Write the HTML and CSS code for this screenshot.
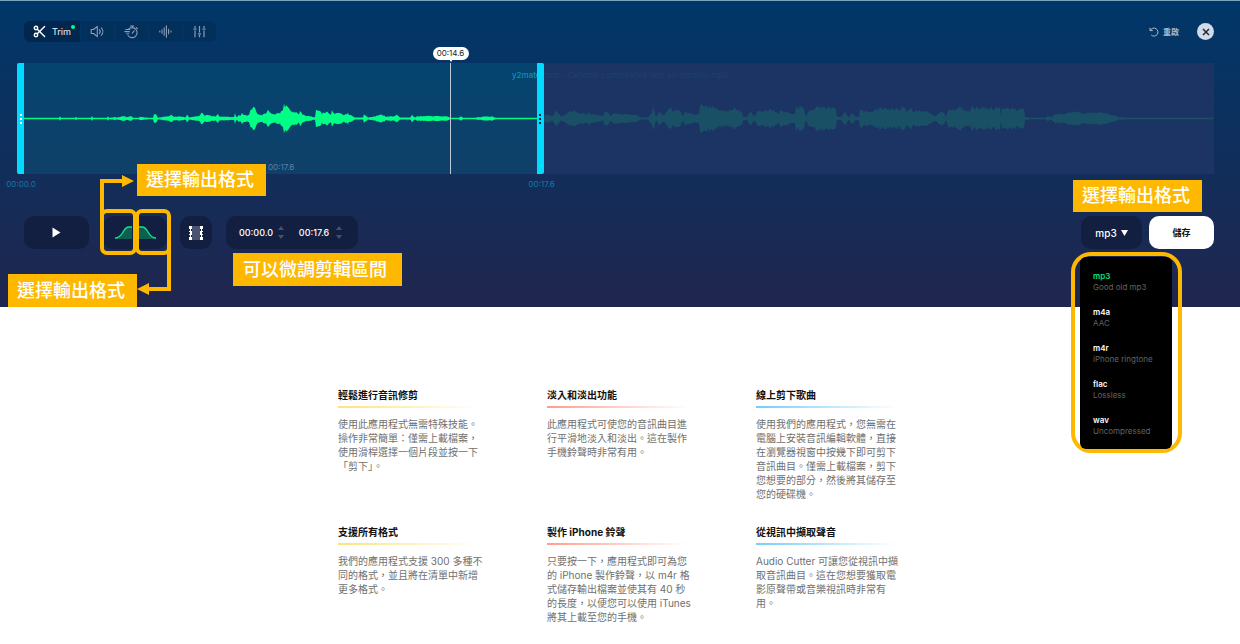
FILE: index.html
```html
<!DOCTYPE html>
<html lang="zh-Hant">
<head>
<meta charset="utf-8">
<meta name="viewport" content="width=device-width, initial-scale=1">
<title>Audio Cutter</title>
<link rel="stylesheet" href="styles.css">
</head>
<body>
<main>
<section class="editor" aria-label="Audio editor">
  <div class="topbar">
    <div class="tabs">
      <button class="tab tab-active" type="button">
        <svg width="13" height="13" viewBox="0 0 13 13" fill="none" stroke="currentColor" stroke-width="1.4" stroke-linecap="round"><circle cx="3" cy="3" r="1.7"/><circle cx="3" cy="10" r="1.7"/><path d="M4.3 4.2 11.6 11.6M4.3 8.8 11.6 1.4"/></svg>
        <span>Trim</span><i class="dot"></i>
      </button>
      <button class="tab" type="button" aria-label="Volume">
        <svg width="15" height="13" viewBox="0 0 15 13" fill="none" stroke="currentColor" stroke-width="1.1" stroke-linejoin="round" stroke-linecap="round"><path d="M1.2 4.5h2.3L7.3 1.3v10.4L3.5 8.5H1.2zM9.4 4.6c1 1.1 1 2.7 0 3.8M11.3 2.8c2.1 2.1 2.1 5.3 0 7.4"/></svg>
      </button>
      <button class="tab" type="button" aria-label="Speed">
        <svg width="15" height="14" viewBox="0 0 15 14" fill="none" stroke="currentColor" stroke-width="1.1" stroke-linecap="round"><path d="M4.6 4.1a5 5 0 1 1-.6 6.4M6.6 1h3.2M8.2 1v1.7M12.4 2.6l1 1M8.2 8.2l2-2.3M1.8 4.5h4M.8 6.6h4.6M2.8 8.7h2"/></svg>
      </button>
      <button class="tab" type="button" aria-label="Pitch">
        <svg width="13" height="13" viewBox="0 0 13 13" fill="none" stroke="currentColor" stroke-width="1.1" stroke-linecap="round"><path d="M.8 6v1M3 4.7v3.6M5.2 2.8v7.4M7.4.8v11.4M9.6 4.2v4.6M12 6v1"/></svg>
      </button>
      <button class="tab" type="button" aria-label="Equalizer">
        <svg width="13" height="13" viewBox="0 0 13 13" fill="none" stroke="currentColor" stroke-width="1.2"><path d="M2 1v2M2 5.5v6.8M.5 4.2h3M6.5 1v6.5M6.5 10v2.3M5 8.8h3M11 1v2M11 5.5v6.8M9.5 4.2h3"/></svg>
      </button>
    </div>
    <div class="actions">
      <button class="restart" type="button">
        <svg width="10" height="10" viewBox="0 0 10 10" fill="none" stroke="currentColor" stroke-width="1"><path d="M1 .8v2.8h2.8M1.3 3.5A4 4 0 1 1 2.2 8"/></svg>
        <span>重啟</span>
      </button>
      <button class="close" type="button" aria-label="Close">
        <svg width="8" height="8" viewBox="0 0 8 8" stroke="currentColor" stroke-width="1.5"><path d="M1 1l6 6M7 1 1 7"/></svg>
      </button>
    </div>
  </div>

  <div class="wave">
    <div class="selection"></div>
    <svg class="wave-svg" viewBox="17 0 1197 111" preserveAspectRatio="none" aria-hidden="true">
      <path id="wave-in" class="wave-in"/><path id="wave-out" class="wave-out"/>
    </svg>
    <div class="filename"><span>y2mate</span>.com – Canción cumpleaños feliz en español.mp3</div>
    <div class="duration">00:17.6</div>
    <div class="handle handle-start"><i></i><i></i><i></i></div>
    <div class="handle handle-end"><i></i><i></i><i></i></div>
    <div class="playhead"><span>00:14.6</span></div>
    <div class="mark mark-start">00:00.0</div>
    <div class="mark mark-end">00:17.6</div>
  </div>

  <div class="controls">
    <button class="pill play" type="button" aria-label="Play"><svg width="9" height="11" viewBox="0 0 9 11" fill="#fff"><path d="M.5.5v10l8-5z"/></svg></button>
    <div class="pill fades">
      <button type="button" aria-label="Fade in"><svg width="17" height="14" viewBox="0 0 17 14"><path d="M0 12C9 12 7 1 14 1h3v12H0z" fill="#0d5e53"/><path d="M0 12C9 12 7 1 14 1h3" fill="none" stroke="#0be881" stroke-width="1.4"/></svg></button>
      <button type="button" aria-label="Fade out"><svg width="17" height="14" viewBox="0 0 17 14"><path d="M17 12C8 12 10 1 3 1H0v12h17z" fill="#0d5e53"/><path d="M17 12C8 12 10 1 3 1H0" fill="none" stroke="#0be881" stroke-width="1.4"/></svg></button>
      <svg class="callouts" width="72" height="128" viewBox="0 0 72 128" fill="none" stroke="#ffb800" stroke-width="4" aria-hidden="true">
        <rect x="2" y="47" width="33" height="42" rx="5"/><rect x="37" y="47" width="32" height="42" rx="5"/>
        <path d="M2 52V17h22M69 84v41H48"/>
        <path d="M22 11l12 6-12 6zM49 119l-12 6 12 6z" fill="#ffb800" stroke="none"/>
      </svg>
      <div class="note note-in">選擇輸出格式</div>
      <div class="note note-out">選擇輸出格式</div>
    </div>
    <button class="pill film" type="button" aria-label="Video"><svg width="14" height="14" viewBox="0 0 14 14"><path d="M3 0h8v14H3z" fill="#4b546f"/><path d="M0 0h3v14H0zM11 0h3v14h-3z" fill="#fff"/><path d="M0 3h1v2H0zM0 6h1v2H0zM0 9h1v2H0zM2 3h1v2H2zM2 9h1v2H2zM13 3h1v2h-1zM13 6h1v2h-1zM13 9h1v2h-1zM11 3h1v2h-1zM11 9h1v2h-1z" fill="#14203f"/></svg></button>
    <div class="pill times">
      <input class="time" type="text" value="00:00.0" aria-label="Start time">
      <span class="spin"><button type="button" aria-label="Start later"></button><button class="down" type="button" aria-label="Start earlier"></button></span>
      <input class="time" type="text" value="00:17.6" aria-label="End time">
      <span class="spin"><button type="button" aria-label="End later"></button><button class="down" type="button" aria-label="End earlier"></button></span>
      <div class="note note-times">可以微調剪輯區間</div>
    </div>
    <div class="format">
      <div class="note note-format">選擇輸出格式</div>
      <button class="pill format-button" type="button" aria-haspopup="listbox" aria-expanded="true" aria-controls="formats">mp3 <svg width="7" height="6" viewBox="0 0 7 6" fill="#fff"><path d="M0 0h7L3.500 6z"/></svg></button>
      <div class="menu-frame">
        <ul class="menu" id="formats" role="listbox" aria-label="Format">
          <li class="chosen" role="option" aria-selected="true"><b>mp3</b><span>Good old mp3</span></li>
          <li role="option"><b>m4a</b><span>AAC</span></li>
          <li role="option"><b>m4r</b><span>iPhone ringtone</span></li>
          <li role="option"><b>flac</b><span>Lossless</span></li>
          <li role="option"><b>wav</b><span>Uncompressed</span></li>
        </ul>
      </div>
    </div>
    <button class="pill save" type="button">儲存</button>
  </div>
</section>

<section class="features">
  <article class="feature yellow"><h2>輕鬆進行音訊修剪</h2><p>使用此應用程式無需特殊技能。操作非常簡單：僅需上載檔案，使用滑桿選擇一個片段並按一下「剪下」。</p></article>
  <article class="feature red"><h2>淡入和淡出功能</h2><p>此應用程式可使您的音訊曲目進行平滑地淡入和淡出。這在製作手機鈴聲時非常有用。</p></article>
  <article class="feature blue"><h2>線上剪下歌曲</h2><p>使用我們的應用程式，您無需在電腦上安裝音訊編輯軟體，直接在瀏覽器視窗中按幾下即可剪下音訊曲目。僅需上載檔案，剪下您想要的部分，然後將其儲存至您的硬碟機。</p></article>
  <article class="feature yellow"><h2>支援所有格式</h2><p>我們的應用程式支援 300 多種不同的格式，並且將在清單中新增更多格式。</p></article>
  <article class="feature red"><h2>製作 iPhone 鈴聲</h2><p>只要按一下，應用程式即可為您的 iPhone 製作鈴聲，以 m4r 格式儲存輸出檔案並使其有 40 秒的長度，以便您可以使用 iTunes 將其上載至您的手機。</p></article>
  <article class="feature blue"><h2>從視訊中擷取聲音</h2><p>Audio Cutter 可讓您從視訊中擷取音訊曲目。這在您想要獲取電影原聲帶或音樂視訊時非常有用。</p></article>
</section>
</main>
<script src="wave.js"></script>
</body>
</html>
```
FILE: styles.css
```css
* { box-sizing: border-box; }
body {
  margin: 0;
  background: #fff;
  color: #111;
  font-family: Inter, "Noto Sans CJK TC", sans-serif;
  font-size: 10px;
  overflow-x: hidden;
}
button, input { font: inherit; color: inherit; border: 0; padding: 0; background: none; }
button { cursor: pointer; }
svg { display: block; flex: none; }

.editor {
  border-top: 1px solid #7da3bf;
  padding: 20px 26px 58px 17px;
  background: linear-gradient(#003769, #20264e);
}
.topbar { display: flex; justify-content: space-between; align-items: center; padding-left: 7px; height: 21px; }
.tabs { display: flex; gap: 1px; height: 21px; border-radius: 6px; overflow: hidden; }
.tab {
  width: 33px;
  display: flex;
  align-items: center;
  justify-content: center;
  background: #032f5b;
  color: #8c9fb8;
}
.tab-active { position: relative; width: 56px; gap: 6px; background: #02274e; color: #fff; font-size: 9px; font-weight: 500; }
.tab-active span { color: #d5dde6; }
.dot { position: absolute; right: 5px; top: 4px; width: 4px; height: 4px; border-radius: 2px; background: #00ff85; }
.actions { display: flex; align-items: center; gap: 18px; }
.restart { display: flex; align-items: center; gap: 4px; color: #a9bacb; font-size: 8px; font-weight: 700; }
.close {
  width: 17px; height: 17px; border-radius: 9px;
  display: flex; align-items: center; justify-content: center;
  background: #d3dbe6; color: #1b2a44;
}

.wave { position: relative; height: 111px; margin-top: 21px; background: #1c3463; }
.selection { position: absolute; inset: 0 56% 0 0; background: linear-gradient(#04446f, #104069); }
.wave-svg { position: absolute; inset: 0; width: 100%; height: 100%; }
.wave-in { fill: #00ff85; }
.wave-out { fill: #1a5066; }
.filename { position: absolute; left: 495px; top: 6px; font-size: 8px; line-height: 12px; color: #1b4172; white-space: nowrap; }
.filename span { color: #0793bd; font-weight: 500; }
.duration { position: absolute; left: 251px; bottom: 1px; font-size: 8px; line-height: 12px; color: #6082a0; }
.handle {
  position: absolute; top: 0; bottom: 0; width: 7px;
  display: flex; flex-direction: column; align-items: center; justify-content: center; gap: 2px;
  background: #00dcff;
}
.handle i { width: 2px; height: 2px; background: #fff; }
.handle-start { left: 0; border-radius: 2px 0 0 2px; }
.handle-end { left: 44%; margin-left: -7px; border-radius: 0 2px 2px 0; }
.handle-end i { background: #06233c; }
.playhead { position: absolute; left: 433px; top: 0; bottom: 0; width: 1px; background: #b9c9d6; }
.playhead span {
  position: absolute; left: 50%; top: -16px; transform: translateX(-50%);
  width: 36px; height: 13px; border-radius: 7px;
  background: #fff; color: #222; font-size: 8px; line-height: 13px; text-align: center;
}
.playhead span::after {
  content: ""; position: absolute; left: 16px; top: 12px;
  border: 2px solid transparent; border-top: 3px solid #fff;
}
.mark { position: absolute; top: 115px; width: 40px; text-align: center; font-size: 8px; line-height: 12px; color: #1579a5; }
.mark-start { left: -16px; }
.mark-end { left: 44%; margin-left: -22px; }

.controls { display: flex; align-items: stretch; height: 33px; margin-top: 42px; padding-left: 7px; }
.pill { border-radius: 10px; background: #131f40; color: #fff; display: flex; align-items: center; justify-content: center; }
.play { width: 65px; }
.fades { position: relative; width: 64px; margin-left: 14px; gap: 7px; }
.fades button { display: flex; }
.callouts { position: absolute; left: -3px; top: -52px; overflow: visible; }
.film { width: 32px; margin-left: 13px; }
.times { position: relative; width: 132px; margin-left: 14px; padding-right: 2px; }
.time { width: 36px; font-size: 9px; font-weight: 500; text-align: center; }
.spin { display: flex; flex-direction: column; gap: 5px; margin: 0 12px 0 4px; }
.spin:nth-of-type(2) { margin-right: 2px; }
.spin button { width: 6px; height: 4px; background: #485069; clip-path: polygon(50% 0, 100% 100%, 0 100%); }
.spin .down { clip-path: polygon(0 0, 100% 0, 50% 100%); }
.format { position: relative; margin-left: auto; display: flex; }
.format-button { width: 61px; gap: 4px; font-weight: 500; }
.save { width: 65px; margin-left: 7px; background: #fff; color: #111; font-size: 9px; font-weight: 700; }

.note {
  position: absolute; z-index: 3; padding: 0 12px 0 9px;
  background: #ffb800; color: #fff;
  font-size: 18px; font-weight: 500; line-height: 32px; white-space: nowrap;
}
.note-in { left: 34px; top: -52px; }
.note-out { left: -95px; top: 58px; line-height: 33px; }
.note-times { left: 7px; top: 37px; padding: 0 15px 0 10px; line-height: 33px; }
.note-format { left: -8px; top: -36px; }

.menu-frame {
  position: absolute; z-index: 2; left: -10px; top: 36px; width: 111px;
  border: 4px solid #ffb800; border-radius: 20px; padding: 1px 6px 0 5px;
}
.menu { list-style: none; margin: 0; padding: 14px 13px 12px; border-radius: 6px; background: #000; display: grid; gap: 14px; }
.menu li { display: grid; font-size: 8px; line-height: 11px; color: #626262; white-space: nowrap; }
.menu b { color: #fff; font-weight: 600; }
.menu .chosen b { color: #00e676; }

.features {
  display: grid; grid-template-columns: repeat(3, 148px); column-gap: 61px; row-gap: 24px;
  justify-content: center; padding: 81px 0 20px 2px;
}
.feature { --accent: #ffe27a; }
.feature.red { --accent: #ff9c8c; }
.feature.blue { --accent: #75cdfa; }
.feature h2 {
  margin: 0 8px 9px 0; padding-bottom: 4px; font-size: 10px; font-weight: 700; line-height: 14px;
  border-bottom: 2px solid; border-image: linear-gradient(90deg, var(--accent), transparent) 1;
}
.feature p { margin: 0; line-height: 14px; color: #707070; line-break: strict; }
```
FILE: wave.js
```js
// Envelope samples: x position and half height of the waveform.
const inside = "24 .7 59 .7 60 2 61 .7 75 .7 76 1.5 77 .7 91 .7 92 2.5 93 .7 107 .7 108 2 109 .7 115 1.5 117 1 123 2 124 2.5 126 1.5 131 2 133 .8 139 .8 140 1.5 148 .8 153 .8 154 3.5 156 3.500 158 .8 163 1.500 168 2 171 3.5 174 1.5 180 2 185 1 187 3.5 189 1 195 2 199 2 202 5.5 204 3 210 3 216 2 218 5 219 2 230 1.5 234 1.5 235 5 236 2 238 2 239 4 240 3 242 5 244 3 249 3 250 6 252 10 255 9 257 5 262 3 266 5 268 7 271 5 275 4 280 5 283 8 284 12.5 286 11 292 7 297 5 299 4 300 7 302 4 310 2 315 1 316 7 318 8 322 5 328 6 331 4 332 7 336 5 345 4 348 4 348 7 349 4 355 1 363 1 364 4 368 1 375 2 381 4 386 2 395 2 397 3.5 400 1 410 1 412 3.5 415 1 417 2 430 2.5 440 2 447 2 450 .8 459 .8 461 2 463 .8 475 .8 480 1.5 492 2 496 .8 508 .8 538 .7";
const outside = "544 3 548 4 552 2 557 7 561 1.5 566 5 573 7 580 5 585 4 589 4 589 8 590 4 600 3 603 1.5 605 7 608 5 611 2 613 5 620 4 625 4 637 3 640 1 648 1 651 4 653 10 656 2 660 6 663 3 666 5 669 11 673 8 680 7 683 3 686 7 692 4 699 4 700 12 715 11 720 8 728 7 735 9 742 6 743 1.5 747 1.5 750 7 755 2 757 6 765 8 772 9 778 4 780 7 790 5 795 4 796 10 804 10 805 3 807 3 808 6 813 8 815 11 825 10 836 9 837 1.5 841 1.5 845 6 849 1 852 5 856 1.5 859 1.5 860 8 865 6 875 7 878 9 890 9 903 10 905 9 906 6 909 10 915 7 925 7 930 5 935 2 938 4 942 8 946 2 948 8 955 8 959 11 965 8 970 6 972 11 985 9 988 10 1000 10 1001 3 1002 9 1008 9 1024 9 1025 1.5 1030 .8 1046 .8 1048 3 1050 1 1056 4 1062 4 1075 6 1085 5 1100 6 1110 4 1119 1 1130 .8 1214 .8";

function wavePath(source) {
  const v = source.split(" ").map(Number);
  const upper = [];
  const lower = [];
  for (let i = 0; i < v.length - 2; i += 2) {
    const [x0, a0, x1, a1] = v.slice(i, i + 4);
    for (let x = x0; x < x1; x++) {
      const a = a0 + (a1 - a0) * (x - x0) / (x1 - x0);
      const k = a > 1.1 ? 0.8 + 0.4 * Math.abs(Math.sin(x * x * 12.9)) : 1;
      upper.push(`${x} ${55.5 - a * k}`);
      lower.unshift(`${x} ${55.5 + a * k}`);
    }
  }
  const end = v[v.length - 2];
  return `M${upper.join("L")}L${end} 55L${end} 56L${lower.join("L")}Z`;
}
document.getElementById("wave-in").setAttribute("d", wavePath(inside));
document.getElementById("wave-out").setAttribute("d", wavePath(outside));
```
